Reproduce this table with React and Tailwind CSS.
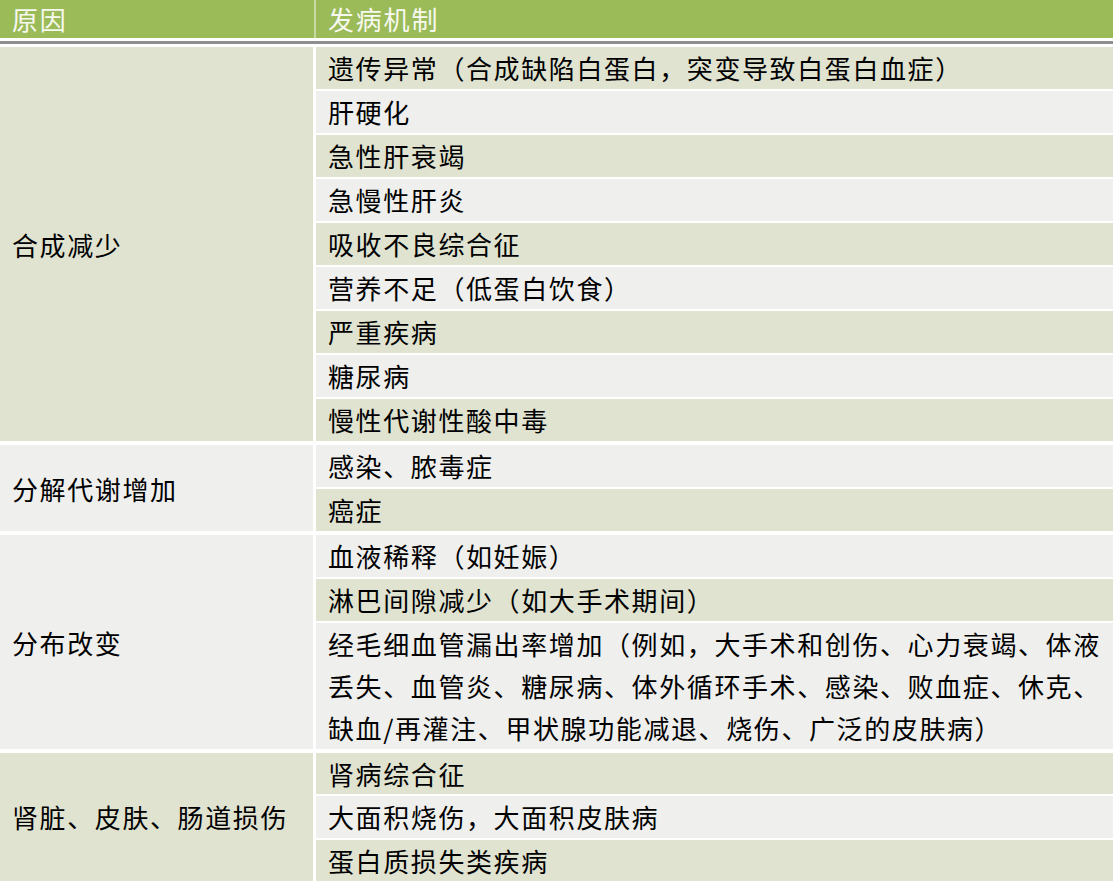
import React from "react";

const GREEN = "bg-[#dfe3d0]";
const GRAY = "bg-[#efefed]";

const groups = [
  {
    label: "合成减少",
    bg: GREEN,
    rows: [
      ["遗传异常（合成缺陷白蛋白，突变导致白蛋白血症）"],
      ["肝硬化"],
      ["急性肝衰竭"],
      ["急慢性肝炎"],
      ["吸收不良综合征"],
      ["营养不足（低蛋白饮食）"],
      ["严重疾病"],
      ["糖尿病"],
      ["慢性代谢性酸中毒"],
    ],
  },
  {
    label: "分解代谢增加",
    bg: GRAY,
    rows: [["感染、脓毒症"], ["癌症"]],
  },
  {
    label: "分布改变",
    bg: GRAY,
    rows: [
      ["血液稀释（如妊娠）"],
      ["淋巴间隙减少（如大手术期间）"],
      [
        "经毛细血管漏出率增加（例如，大手术和创伤、心力衰竭、体液",
        "丢失、血管炎、糖尿病、体外循环手术、感染、败血症、休克、",
        "缺血/再灌注、甲状腺功能减退、烧伤、广泛的皮肤病）",
      ],
    ],
  },
  {
    label: "肾脏、皮肤、肠道损伤",
    bg: GREEN,
    rows: [["肾病综合征"], ["大面积烧伤，大面积皮肤病"], ["蛋白质损失类疾病"]],
  },
];

export default function App() {
  let idx = 0;
  return (
    <div
      className="w-[1116px] h-[886px] bg-white text-black overflow-hidden"
      style={{ fontFamily: '"Noto Sans CJK SC", "Noto Sans", sans-serif' }}
    >
      <div className="w-[1113px] flex flex-col">
        {/* header */}
        <div className="flex h-[38px] gap-[2px] bg-[#c9d9a6]">
          <div className="w-[314px] bg-[#9bbb59] text-[#f7f9f0] text-[26px] tracking-[1.8px] leading-[38px] pl-[12px]">
            原因
          </div>
          <div className="flex-1 bg-[#9bbb59] text-[#f7f9f0] text-[26px] tracking-[1.8px] leading-[38px] pl-[12px]">
            发病机制
          </div>
        </div>
        <div className="h-[3px] bg-white" />
        <div className="h-[3px] bg-[#8e8e8e]" />
        <div className="h-[3px] bg-white" />
        <div className="flex flex-col gap-[4px]">
          {groups.map((g, gi) => (
            <div key={g.label} className="flex gap-[3px]">
              <div
                className={`w-[313px] ${g.bg} flex items-center pl-[12px] text-[26px] tracking-[1.6px]`}
              >
                {g.label}
              </div>
              <div className="flex-1 flex flex-col gap-[2px]">
                {g.rows.map((lines) => {
                  const bg = idx % 2 === 0 ? GREEN : GRAY;
                  idx += 1;
                  return (
                    <div
                      key={lines[0]}
                      className={`${bg} pl-[12px] text-[26px] tracking-[1.6px] whitespace-nowrap ${
                        gi === 3 ? "leading-[41.3px]" : "leading-[42px]"
                      }`}
                    >
                      {lines.map((l, i) => (
                        <div key={i}>{l}</div>
                      ))}
                    </div>
                  );
                })}
              </div>
            </div>
          ))}
        </div>
      </div>
    </div>
  );
}
